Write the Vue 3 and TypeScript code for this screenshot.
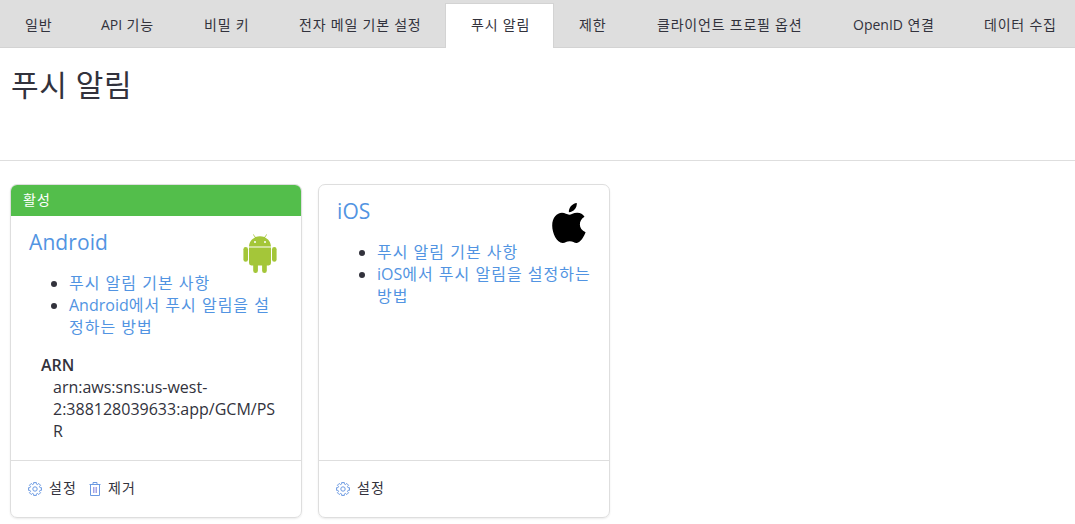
<script setup lang="ts">
interface Tab { label: string; width: number; active?: boolean }
interface Card {
  title: string
  kind: 'android' | 'ios'
  status?: string
  links: string[][]
  arn?: string
  actions: { label: string; icon: 'gear' | 'trash' }[]
}

const tabs: Tab[] = [
  { label: '일반', width: 76 },
  { label: 'API 기능', width: 103 },
  { label: '비밀 키', width: 95 },
  { label: '전자 메일 기본 설정', width: 171 },
  { label: '푸시 알림', width: 109, active: true },
  { label: '제한', width: 78 },
  { label: '클라이언트 프로필 옵션', width: 196 },
  { label: 'OpenID 연결', width: 131 },
  { label: '데이터 수집', width: 122 },
]

const cards: Card[] = [
  {
    title: 'Android',
    kind: 'android',
    status: '활성',
    links: [['푸시 알림 기본 사항'], ['Android에서 푸시 알림을 설', '정하는 방법']],
    arn: 'arn:aws:sns:us-west-2:388128039633:app/GCM/PSR',
    actions: [{ label: '설정', icon: 'gear' }, { label: '제거', icon: 'trash' }],
  },
  {
    title: 'iOS',
    kind: 'ios',
    links: [['푸시 알림 기본 사항'], ['iOS에서 푸시 알림을 설정하는', '방법']],
    actions: [{ label: '설정', icon: 'gear' }],
  },
]

// Hangul runs get wider tracking than Latin runs.
function runs(text: string): { text: string; ko: boolean }[] {
  return (text.match(/[A-Za-z]+|[^A-Za-z]+/g) ?? []).map((t) => ({ text: t, ko: !/[A-Za-z]/.test(t) }))
}

const teeth = 8
function gearPath(): string {
  const pts: string[] = []
  for (let i = 0; i < teeth; i++) {
    const a = (i * 2 * Math.PI) / teeth
    for (const [da, r] of [[-0.25, 5.2], [-0.19, 6.7], [0.19, 6.7], [0.25, 5.2]]) {
      pts.push(`${(7 + r * Math.sin(a + da)).toFixed(2)} ${(7 - r * Math.cos(a + da)).toFixed(2)}`)
    }
  }
  return `M${pts.join('L')}Z`
}
const gear = gearPath()
</script>

<template>
  <div class="page">
    <nav class="tabs">
      <a v-for="t in tabs" :key="t.label" class="tab" :class="{ active: t.active }" :style="{ width: t.width + 'px' }">
        <span v-for="(r, i) in runs(t.label)" :key="i" :class="{ ko: r.ko }">{{ r.text }}</span>
      </a>
    </nav>
    <header class="heading"><h1>푸시 알림</h1></header>
    <main class="cards">
      <section v-for="c in cards" :key="c.title" class="card">
        <div v-if="c.status" class="status">{{ c.status }}</div>
        <div class="body">
          <div class="top">
            <h2>{{ c.title }}</h2>
            <svg v-if="c.kind === 'android'" class="logo" width="34" height="40" viewBox="0 0 34 40" fill="#a4c639">
              <path d="M6 12.400C6.200 8 8.700 4.900 12 3.400L9.900.5l.5-.3 2.200 2.900a13 13 0 0 1 8.800 0L23.600.2l.5.3L22 3.400c3.300 1.500 5.800 4.600 6 9z" />
              <path d="M6 13.400h22v15.700a2.300 2.300 0 0 1-2.300 2.300h-1.900v5.300a2.300 2.300 0 0 1-4.700 0v-5.300h-4.200v5.300a2.300 2.300 0 0 1-4.700 0v-5.300H8.300A2.300 2.300 0 0 1 6 29.100z" />
              <rect x=".4" y="13" width="4.600" height="14.800" rx="2.300" />
              <rect x="29" y="13" width="4.600" height="14.800" rx="2.300" />
              <g fill="#fff"><circle cx="12" cy="8" r="1" /><circle cx="22" cy="8" r="1" /></g>
            </svg>
            <svg v-else class="logo apple" width="34" height="40" viewBox="0 0 34 40">
              <path d="M24.800 0c.3 4.800-3.200 9-7.900 9.200C16.400 4.800 20.300.3 24.800 0z" />
              <path d="M32.500 13.700c-6.700 4-6 12.800 1.100 15.600-1.700 4.600-5.200 10.300-8.800 10.600-2.800.1-3.700-1.700-7-1.700s-4.400 1.700-7 1.800C5 40.100.2 30.200.2 22.700.2 14.500 4.900 9.900 10 9.800c2.900 0 5.200 1.900 7.200 1.900 1.900 0 4.600-2.200 8.300-2 2.900.1 5.400 1.400 7 4z" />
            </svg>
          </div>
          <ul>
            <li v-for="(lines, i) in c.links" :key="i">
              <a v-for="l in lines" :key="l" class="line"><span v-for="(r, j) in runs(l)" :key="j" :class="{ ko: r.ko }">{{ r.text }}</span></a>
            </li>
          </ul>
          <dl v-if="c.arn">
            <dt>ARN</dt>
            <dd>{{ c.arn }}</dd>
          </dl>
        </div>
        <footer>
          <a v-for="a in c.actions" :key="a.label" class="action">
            <svg v-if="a.icon === 'gear'" class="icon" width="14" height="14" viewBox="0 0 14 14">
              <path :d="gear" /><circle cx="7" cy="7" r="2.200" />
            </svg>
            <svg v-else class="icon trash" width="12" height="14" viewBox="0 0 12 14">
              <path d="M.5 2.500h11M4 2.500v-2h4v2M1.500 2.500v11h9v-11" /><path class="bars" d="M4.500 5v6M6 5v6M7.500 5v6" />
            </svg>
            <span>{{ a.label }}</span>
          </a>
        </footer>
      </section>
    </main>
  </div>
</template>

<style>
body { margin: 0; background: #fff; }
</style>
<style scoped>
.page { height: 524px; overflow: hidden; color: #32323c; font: 16px/22px "Open Sans", "Noto Sans CJK KR", sans-serif; }
.tabs { display: flex; box-sizing: border-box; height: 48px; padding-top: 3px; background: #dedede; box-shadow: inset 0 -1px #d3d3d3; font-size: 14px; overflow: hidden; }
.tab { flex: none; box-sizing: border-box; padding: 11px 0 0 25px; white-space: pre; }
.tab.active { padding: 10px 0 0 25px; border: 1px solid #d3d3d3; border-bottom: 0; background: #fff; }
.tab .ko { letter-spacing: .78px; }
.heading { box-sizing: border-box; height: 113px; padding: 17px 11px 0; border-bottom: 1px solid #dedede; }
h1 { margin: 0; font-size: 30px; line-height: 40px; font-weight: 400; letter-spacing: .6px; }
.cards { display: flex; gap: 16px; padding: 23px 10px 0; }
.card { display: flex; flex-direction: column; box-sizing: border-box; width: 292px; height: 334px; border: 1px solid #dedede; border-radius: 7px; overflow: hidden; box-shadow: 0 1px 2px rgba(0, 0, 0, .08); }
.status { height: 31px; padding-left: 12px; background: #53be4b; color: #fff; font-size: 14px; line-height: 30px; letter-spacing: 1px; }
.body { flex: 1; padding: 11px 17px 0 18px; }
.top { display: flex; justify-content: space-between; height: 45px; }
h2 { margin: 0; color: #5294e2; font-size: 21px; line-height: 30px; font-weight: 400; letter-spacing: .1px; }
.logo { margin: 7px 7px 0 0; }
.logo.apple { margin-right: 6px; }
ul { margin: 0; padding-left: 40px; }
.line { display: block; color: #5294e2; white-space: pre; }
.line .ko { letter-spacing: 1px; }
dl { margin: 16px 0 0 12px; }
dt { font-weight: 600; }
dd { margin: 0 0 0 12px; width: 226px; overflow-wrap: anywhere; }
footer { display: flex; gap: 12px; box-sizing: border-box; height: 57px; padding: 16px 17px 0; border-top: 1px solid #dedede; font-size: 14px; letter-spacing: 1.100px; }
.action { display: flex; gap: 7px; }
.icon { margin-top: 5px; fill: none; stroke: #6c9ae2; stroke-width: 1; }
.trash .bars { stroke: #a5a4e5; }
</style>
